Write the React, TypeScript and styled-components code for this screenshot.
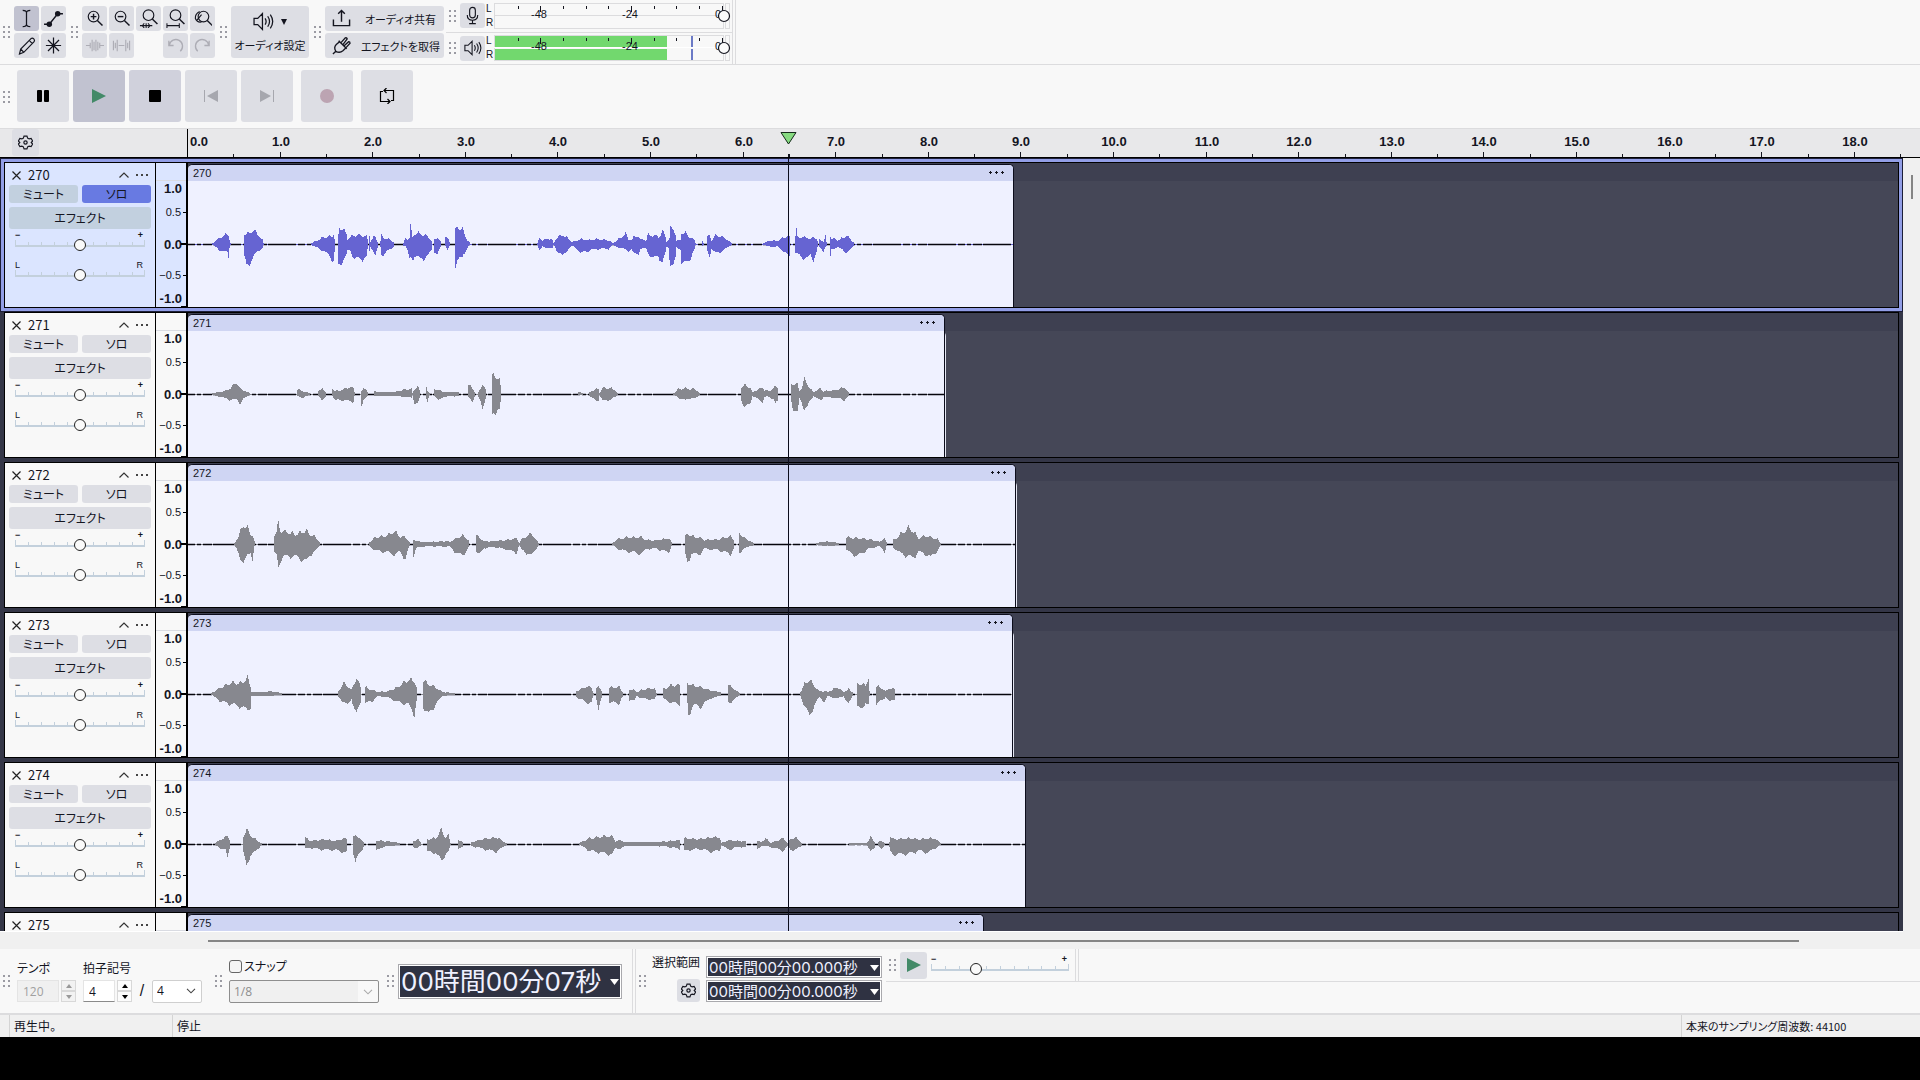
import React from "react";
import styled, { createGlobalStyle } from "styled-components";

const INK = "#14151f";
const FACE = "#dddee4";
const LINE = "#dcdcde";
const UI = `"Liberation Sans", "Noto Sans CJK JP", sans-serif`;
const JP = `"Noto Sans CJK JP", "Liberation Sans", sans-serif`;

const Global = createGlobalStyle`
  *, *::before, *::after { box-sizing: border-box; }
  html, body, #root { height: 100%; }
  body { margin: 0; background: #000; color: ${INK}; font: 12px/16px ${UI}; overflow: hidden; }
  button, input, select { font: inherit; color: inherit; margin: 0; }
  svg { display: block; flex: none; }
`;

const Screen = styled.div`
  height: 100vh;
  padding-bottom: 43px;
  display: flex;
  flex-direction: column;
  background: #000;
`;

const Window = styled.main`
  flex: 1;
  min-height: 0;
  display: flex;
  flex-direction: column;
  background: #f8f8f8;
`;

/* ---------- shared toolbar parts ---------- */

const Dock = styled.div`
  display: flex;
  align-items: stretch;
  flex: none;
  border-bottom: 1px solid ${LINE};
`;

const TopDock = styled(Dock)`
  height: 65px;
`;

const Bar = styled.section<{ $end?: number }>`
  display: flex;
  align-items: center;
  padding-right: ${(p) => p.$end ?? 2}px;
`;

const GripBox = styled.span`
  flex: none;
  width: 14px;
  padding: 0 3px;
`;

const Grip = () => (
  <GripBox>
    <svg width="8" height="12" fill="#9b9ba3">
      {[0, 5, 10].map((y) => (
        <React.Fragment key={y}>
          <rect x="0" y={y} width="2" height="2" />
          <rect x="5" y={y} width="2" height="2" />
        </React.Fragment>
      ))}
    </svg>
  </GripBox>
);

const Button = styled.button<{ $w: number; $h: number; $tone?: string }>`
  flex: none;
  width: ${(p) => p.$w}px;
  height: ${(p) => p.$h}px;
  padding: 0;
  border: 0;
  border-radius: 3px;
  background: ${(p) => p.$tone ?? FACE};
  display: flex;
  align-items: center;
  justify-content: center;
`;

const IconGrid = styled.div<{ $cols: number }>`
  display: grid;
  grid-template-columns: repeat(${(p) => p.$cols}, 25px);
  grid-auto-rows: 25px;
  gap: 2px;
`;

const Stack = styled.div<{ $gap?: number; $end?: number }>`
  display: flex;
  flex-direction: column;
  gap: ${(p) => p.$gap ?? 2}px;
  padding-bottom: ${(p) => p.$end ?? 0}px;
`;

const SetupButton = styled(Button)`
  flex-direction: column;
  gap: 5px;
  font: 11px/16px ${JP};
  font-feature-settings: "palt";
`;

const SetupTop = styled.span`
  display: flex;
  align-items: center;
  gap: 7px;
`;

const WideButton = styled(Button)`
  display: grid;
  grid-template-columns: 32px 1fr;
  justify-items: center;
  font: 11px/16px ${JP};
  font-feature-settings: "palt";
`;

const Double = styled.span`
  width: 4px;
  border: solid ${LINE};
  border-width: 0 1px;
`;

/* ---------- icons ---------- */

const Icon = ({ s = 19, children }: { s?: number; children: React.ReactNode }) => (
  <svg width={s} height={s} viewBox="0 0 20 20" fill="none" stroke={INK} strokeWidth="1.2">
    {children}
  </svg>
);

const Lens = ({ cx = 9, cy = 8 }: { cx?: number; cy?: number }) => (
  <>
    <circle cx={cx} cy={cy} r="5.6" />
    <path d={`M${cx + 4} ${cy + 4}l5.4 5.4`} strokeWidth="1.5" />
  </>
);

const Caret = () => (
  <Icon>
    <path d="M6 1.5q4 0 4 2.500q0-2.500 4-2.500M10 4v12M6 18.500q4 0 4-2.500q0 2.500 4 2.500" strokeWidth="1.3" />
  </Icon>
);
const Envelope = () => (
  <Icon s={21}>
    <path d="M1 15.500h5l8-10h5" strokeWidth="1.3" />
    <circle cx="6" cy="15.500" r="2.600" fill={INK} stroke="none" />
    <circle cx="14" cy="5.500" r="2.600" fill={INK} stroke="none" />
  </Icon>
);
const Pencil = () => (
  <Icon s={20}>
    <path d="M2.500 18l1.200-5L14 2.600q1.500-1 2.800.3t.3 2.800L6.800 16.300zM12.200 4.400l3.400 3.400M3.700 13l3.100 3.300" />
  </Icon>
);
const Star = () => (
  <Icon>
    <path d="M10 1.500v17M2 10h16M4.200 4.200l11.600 11.600M15.800 4.200L4.200 15.800" strokeWidth="1.300" />
  </Icon>
);
const ZoomIn = () => (
  <Icon>
    <Lens />
    <path d="M6 8h6M9 5v6" strokeWidth="1.500" />
  </Icon>
);
const ZoomOut = () => (
  <Icon>
    <Lens />
    <path d="M6 8h6" strokeWidth="1.500" />
  </Icon>
);
const FitSelection = () => (
  <Icon>
    <Lens cx={10} cy={6.5} />
    <path d="M1 17.500h13M5.500 15l-2 2.500 2 2.500M9.500 15l2 2.500-2 2.500M7.500 15v5" strokeWidth="1.100" />
  </Icon>
);
const FitProject = () => (
  <Icon>
    <Lens cx={10} cy={6.5} />
    <path d="M1 17.500h13M1 15v5M14 15v5" strokeWidth="1.100" />
  </Icon>
);
const ZoomToggle = () => (
  <Icon>
    <Lens cx={11} cy={8} />
    <path d="M7 2.600Q2 5 2.500 10q2 4.500 6.500 3.600M3.500 12.500L9 6" />
  </Icon>
);
const Pale = ({ children }: { children: React.ReactNode }) => (
  <svg width="19" height="19" viewBox="0 0 20 20" fill="none" stroke="#adadb5" strokeWidth="1.200">
    {children}
  </svg>
);
const Trim = () => (
  <Pale>
    <path d="M1 10h4M15 10h5M5.500 7v6M7.500 4v12M9.500 6v9M11.500 4v12M13.500 6v9M15.500 7v6" />
  </Pale>
);
const Silence = () => (
  <Pale>
    <path d="M1.500 5v10M3.500 7v6M5.500 4v12M7 10h6M14.500 4v12M16.500 7v6M18.500 5v10" />
  </Pale>
);
const Undo = () => (
  <Pale>
    <path d="M3 5v5h5M3.500 9.500A7 7 0 1 1 15 16" strokeWidth="1.400" />
  </Pale>
);
const Redo = () => (
  <Pale>
    <path d="M17 5v5h-5M16.500 9.500A7 7 0 1 0 5 16" strokeWidth="1.400" />
  </Pale>
);
const Speaker = ({ s = 20 }: { s?: number }) => (
  <Icon s={s}>
    <path d="M1 7h3.500L9 2.500v15L4.500 13H1zM11.500 7q2 3 0 6M14 5q3.500 5 0 10M16.500 3.500q4.500 6.500 0 13" />
  </Icon>
);
const Mic = () => (
  <Icon>
    <rect x="7" y="1.500" width="6" height="11" rx="3" />
    <path d="M4.500 9.500q0 5.500 5.500 5.500t5.500-5.500M10 15v3.500M6.500 18.500h7" />
  </Icon>
);
const Share = () => (
  <Icon>
    <path d="M1.500 11v6.500h17V11M10 13.500V2M6.500 5L10 1.500 13.500 5" strokeWidth="1.500" />
  </Icon>
);
const Plug = () => (
  <Icon>
    <path
      d="M1 19l3-3M4 16q-2.500-4 .5-7L8 6l6.500 6.500-3 3Q8 18.500 4 16zM7 5l8.500 8.500M9.500 7l4.500-5q1.500-.5 2 1L11.500 9M12.500 10.500l5-4.500q1.500 0 1.500 1.500L14.500 12.500"
      strokeWidth="1.400"
    />
  </Icon>
);
const Gear = ({ s = 15 }: { s?: number }) => (
  <Icon s={s}>
    <path
      d="M8 1.500h4l.8 2.600 2 1.100 2.700-.7 2 3.500-1.900 2 1.900 2-2 3.500-2.700-.7-2 1.100-.8 2.600H8l-.8-2.600-2-1.100-2.700.7-2-3.500 1.900-2-1.900-2 2-3.500 2.700.7 2-1.100z"
      strokeWidth="1.500"
    />
    <circle cx="10" cy="10" r="2.200" strokeWidth="1.600" />
  </Icon>
);
const Down = ({ w = 6, h = 6, c = INK }: { w?: number; h?: number; c?: string }) => (
  <svg width={w} height={h} viewBox="0 0 10 10" preserveAspectRatio="none">
    <path d="M0 0h10L5 10z" fill={c} />
  </svg>
);
const PlayMark = () => (
  <svg width="14" height="14">
    <path d="M0 0l14 7-14 7z" fill="#438a68" />
  </svg>
);

/* ---------- meters ---------- */

const MeterRow = styled.div`
  flex: 1;
  display: flex;
  align-items: center;
  & + & { border-top: 1px solid ${LINE}; }
`;

const ChannelNames = styled.span`
  width: 9px;
  height: 26px;
  padding-left: 1px;
  display: flex;
  flex-direction: column;
  justify-content: space-between;
  font-size: 10px;
  line-height: 12px;
`;

const Meter = ({ level, peak }: { level: number; peak: number }) => (
  <svg width="238" height="26" fontFamily="Liberation Sans" fontSize="11" fill={INK}>
    <g fill="none" stroke={LINE}>
      <rect x="0.500" y="0.500" width="229" height="25" />
      <path d="M0 12.500h230" />
      <rect x="231.500" y="0.500" width="4" height="25" />
    </g>
    {level > 0 && (
      <>
        <rect x="1" y="1" width={level} height="11" fill="#72d86e" />
        <rect x="1" y="14" width={level} height="11" fill="#72d86e" />
        <path d="M0 12.500h230" stroke="#fff" />
        <path d={`M${peak} 1v11M${peak} 14v11`} stroke="#6b7ac6" strokeWidth="2" />
      </>
    )}
    {Array.from({ length: 10 }, (_, i) => (
      <rect key={i} x={Math.round(23.5 + i * 22.7)} y="3" width="1" height={i % 4 === 1 ? 6 : 3} />
    ))}
    <text x="45" y="15" textAnchor="middle">-48</text>
    <text x="136" y="15" textAnchor="middle">-24</text>
    <text x="221" y="15">0</text>
    <circle cx="230" cy="13" r="5.500" fill="#fbfbfb" stroke={INK} strokeWidth="1.200" />
  </svg>
);

/* ---------- transport ---------- */

const TransportRow = styled.div`
  display: flex;
  gap: 4px;
  padding: 5px 3px 6px;
`;
const Apart = styled.div`
  padding-left: 4px;
`;

const Idle = "#a6a7ae";

/* ---------- time ruler ---------- */

const TimeRuler = styled.div`
  flex: none;
  display: flex;
  height: 29px;
  background: #e8e8ea;
  border-bottom: 1px solid #000;
`;
const RulerHead = styled.div`
  width: 187px;
  padding-left: 12px;
`;
const RulerScale = styled.div`
  flex: 1;
  min-width: 0;
`;

const SECOND = 92.6;

const Scale = () => (
  <svg width="100%" height="28" fontFamily="Liberation Sans" fontSize="13" fontWeight="700" fill={INK}>
    <rect x="0" y="0" width="1" height="28" fill="#000" />
    {Array.from({ length: 37 }, (_, i) => i + 1).map((i) => (
      <rect key={i} x={Math.round((i * SECOND) / 2)} y={i % 2 ? 25 : 23} width="1" height="5" />
    ))}
    {Array.from({ length: 19 }, (_, i) => (
      <text key={i} x={i ? Math.round(i * SECOND) + 1 : 3} y="17" textAnchor={i ? "middle" : "start"}>
        {i}.0
      </text>
    ))}
    <rect x="601" y="25" width="1" height="3" />
    <path d="M594 3.500h15l-7.500 11.500z" fill="#86da80" stroke="#142a1a" />
  </svg>
);

/* ---------- tracks ---------- */

const Workspace = styled.div`
  flex: 1;
  min-height: 0;
  display: flex;
  background: #f0f0f0;
`;
const TrackList = styled.div`
  position: relative;
  flex: 1;
  min-width: 0;
  overflow: hidden;
  padding: 4px;
  display: flex;
  flex-direction: column;
  gap: 4px;
  background: #343647;
  border-bottom: 1px solid #fff;
`;
const Playhead = styled.i`
  position: absolute;
  top: 0;
  bottom: 0;
  left: 788px;
  width: 1px;
  background: #0c0d1c;
`;
const VScroll = styled.div`
  width: 17px;
  padding: 17px 0 0 8px;
`;
const VThumb = styled.div`
  width: 2px;
  height: 24px;
  background: #858585;
`;
const HScroll = styled.div`
  flex: none;
  height: 17px;
  padding: 8px 121px 0 208px;
  background: #f0f0f0;
`;
const HThumb = styled.div`
  height: 2px;
  background: #858585;
`;

const TrackFrame = styled.section<{ $on: boolean }>`
  flex: none;
  display: flex;
  height: 146px;
  border: 1px solid #000;
  background: ${(p) => (p.$on ? "#dbe5ff" : "#f8f8f8")};
  box-shadow: ${(p) => (p.$on ? "0 0 0 3px #929ee6, 0 0 0 4px #1d1f38" : "none")};
`;
const Controls = styled.div`
  flex: none;
  width: 151px;
  padding: 0 4px;
  border-right: 1px solid #000;
`;
const TitleRow = styled.header`
  display: grid;
  grid-template-columns: 16px 1fr 18px 18px;
  align-items: center;
  height: 22px;
  padding: 2px 0 0 3px;
`;
const Title = styled.span`
  font: 13px/20px ${JP};
`;
const Bare = styled.button`
  padding: 0;
  border: 0;
  background: none;
  display: flex;
  justify-content: center;
`;
const CloseBare = styled(Bare)`
  justify-content: flex-start;
`;
const Pair = styled.div`
  display: grid;
  grid-template-columns: 1fr 1fr;
  gap: 4px;
  margin-bottom: 4px;
`;
const TrackButton = styled.button<{ $h: number; $tone: string }>`
  width: 100%;
  height: ${(p) => p.$h}px;
  padding: 0;
  border: 0;
  border-radius: 3px;
  background: ${(p) => p.$tone};
  font: 12px/16px ${JP};
  font-feature-settings: "palt";
`;
const Slide = styled.label`
  display: grid;
  grid-template-columns: 1fr 1fr;
  grid-template-rows: 10px 12px;
  align-content: start;
  height: 30px;
  padding: 1px 6px 0;
  font-size: 9px;
  line-height: 10px;
`;
const GainSlide = styled(Slide)`
  font-weight: 700;
`;
const Right = styled.span`
  text-align: right;
  padding-right: 2px;
`;
const Range = styled.input`
  appearance: none;
  grid-column: 1 / -1;
  align-self: end;
  width: 100%;
  height: 14px;
  background:
    linear-gradient(#c3d0dc, #c3d0dc) 0 7px / 100% 2px no-repeat,
    linear-gradient(#c3d0dc, #c3d0dc) 0 2px / 1px 6px no-repeat,
    linear-gradient(#c3d0dc, #c3d0dc) 100% 2px / 1px 6px no-repeat,
    repeating-linear-gradient(90deg, #c3d0dc 0 1px, transparent 1px 10%) 0 4px / 100% 4px no-repeat;
  &::-webkit-slider-thumb {
    appearance: none;
    width: 12px;
    height: 12px;
    border: 1px solid #222;
    border-radius: 50%;
    background: #fafafa;
  }
`;

const Lane = styled.div`
  flex: 1;
  min-width: 0;
  overflow: hidden;
  padding-top: 1px;
  border-left: 2px solid #000;
  background: linear-gradient(#3e4051 18px, #454757 18px);
`;
const Clip = styled.article<{ $edge?: boolean }>`
  height: 143px;
  overflow: hidden;
  border: solid #0c0d1c;
  border-width: 1px 1px 0 0;
  border-radius: 5px 5px 0 0;
  background: #eff1ff;
  box-shadow: ${(p) => (p.$edge ? "1px 17px 0 #e4e6f2" : "none")};
`;
const ClipHead = styled.header`
  display: flex;
  align-items: center;
  justify-content: space-between;
  height: 16px;
  padding: 0 9px 0 5px;
  background: #cfd5f3;
  font: 11px/16px ${UI};
`;

const Dots = () => (
  <svg width="15" height="4" fill={INK}>
    {[0, 1, 2].map((i) => (
      <path key={i} d={`M${i * 6 + 1} 0h1v1h1v1h-1v1h-1v-1h-1v-1h1z`} />
    ))}
  </svg>
);
const SmallDots = () => (
  <svg width="12" height="3" fill="#444">
    <rect x="0" width="2" height="2" />
    <rect x="5" width="2" height="2" />
    <rect x="10" width="2" height="2" />
  </svg>
);

const LevelRuler = ({ marks }: { marks: boolean }) => (
  <svg width="30" height="144" fontFamily="Liberation Sans" fontSize="13" fill={INK} textAnchor="end">
    <rect y="17" width="30" height="1" fill="#d9dbe2" />
    {marks && (
      <>
        <g fontWeight="700">
          <text x="26" y="30">1.0</text>
          <text x="26" y="86">0.0</text>
          <text x="26" y="140">-1.0</text>
        </g>
        <g fontSize="11">
          <text x="25" y="53">0.5</text>
          <text x="25" y="116">−0.5</text>
        </g>
        <path d="M27 49.500h3M27 112.500h3M25 143.500h5" stroke="#000" />
        <path d="M25 81h5" stroke="#000" strokeWidth="2" />
      </>
    )}
  </svg>
);

/* Envelope points are "x up down"; "/" separates the sounding parts. */
const outline = (source: string) =>
  source
    .split("/")
    .map((part) => {
      const pts = part.trim().split(/\s*,\s*/).map((p) => p.split(" ").map(Number));
      const top: string[] = [];
      const bottom: string[] = [];
      const first = Math.round(pts[0][0]);
      const last = Math.round(pts[pts.length - 1][0]);
      for (let x = first; x <= last; x++) {
        let k = pts.findIndex((p) => p[0] >= x);
        if (k < 1) k = k < 0 ? pts.length - 1 : 1;
        const a = pts[k - 1];
        const b = pts[k] ?? a;
        const t = Math.min(1, Math.max(0, (x - a[0]) / (b[0] - a[0] || 1)));
        const n = 1.18 - 0.36 * Math.abs(Math.sin(x * 12.9898));
        const m = 1.18 - 0.36 * Math.abs(Math.sin(x * 78.233));
        const up = Math.max(1, Math.round((a[1] + (b[1] - a[1]) * t) * n));
        const down = Math.max(1, Math.round((a[2] + (b[2] - a[2]) * t) * m));
        top.push(`L${x} ${63 - up}L${x + 1} ${63 - up}`);
        bottom.unshift(`L${x + 1} ${63 + down}L${x} ${63 + down}`);
      }
      return `M${first} 63${top.join("")}${bottom.join("")}Z`;
    })
    .join("");

type TrackData = { name: string; width: number; wave: string; edge?: boolean };

const tracks: TrackData[] = [
  {
    name: "270",
    width: 826,
    wave: "24 1 1,34 8 8,39 10 8,40 10 13,41 5 3,42 1 1/56 11 14,58 10 23,64 14 16,68 12 9,74 4 4,75 1 1/123 1 1,135 7 7,144 8 16,145 11 17,146 6 9/150 10 23,151 19 22,154 15 17,158 11 12,159 5 7,162 7 7,166 9 16,174 9 15,178 8 14,179 5 6/181 10 8,182 3 3,185 7 7,187 7 12,189 3 5/192 3 3,193 9 11,196 6 10,200 5 7,205 2 3/215 1 2,217 6 2,219 5 7,221 6 17,222 18 15,224 7 15,226 11 12,232 11 16,239 8 13,243 3 7/246 5 8,249 7 11,252 3 4/257 8 2,259 6 7,261 2 2/267 14 22,269 18 18,274 15 14,275 13 10,279 4 4,281 2 1/349 1 1,351 7 7,354 3 3,359 6 4,364 4 5,365 1 1,368 6 6,374 10 13,379 6 6,384 2 2,389 4 5,392 5 10,399 4 7,409 5 5,420 4 5,424 1 1,429 4 3,437 11 6,440 5 7,443 4 6,446 8 11,450 8 10,452 5 5,458 4 5,459 9 8,465 9 16,469 8 12,470 7 12,474 13 20,477 8 10,478 3 3,480 4 4,481 6 14,482 16 20,485 16 24,487 10 16,488 3 4,492 4 5,493 12 20,497 11 21,502 7 14,506 4 6,507 1 1/514 3 2,515 1 1/519 7 8,521 9 12,523 4 5,527 9 10,532 8 8,537 6 5,543 1 1/575 1 1,582 4 3,589 3 3,594 6 6,600 9 13,601 7 13/607 8 10,608 14 11,609 7 11,615 7 14,619 7 16,622 5 11,625 7 16,628 6 9,629 3 4/631 4 3,635 3 7,637 9 3,638 2 2/642 8 13,643 6 5,649 4 4,654 6 5,658 9 10,661 6 7,665 2 2",
  },
  {
    name: "271",
    width: 757,
    edge: true,
    wave: "24 1 1,35 3 4,42 6 6,48 12 6,52 5 9,55 4 5,61 1 1/109 5 2,115 3 4,121 1 1/130 4 2,134 5 6,137 3 4/144 6 2,147 3 7,152 4 6,160 7 7,165 6 8,166 2 2/173 3 11,175 7 6,179 2 3/186 3 2,192 2 2,207 2 2,217 5 3,223 5 4,224 1 1,226 5 9,229 8 11,231 4 5/238 6 5,239 3 9,241 1 1/246 5 2,250 4 7,255 2 3,270 2 2/280 10 4,284 6 9,286 3 3/290 2 3,292 6 8,294 11 17,297 4 4/304 17 23,305 20 20,309 17 16,311 15 18,312 8 10/390 2 1,394 1 1/401 2 2,407 5 7,410 5 6,411 1 1,414 6 7,422 6 6,427 4 3,429 1 1/485 1 1,490 5 4,497 6 7,502 5 4,507 5 5,511 1 1/553 7 6,556 9 15,559 8 12,562 6 9,564 2 2,569 4 5,574 7 8,576 4 3,580 3 3,585 6 5,587 8 10,589 7 8/603 11 8,605 11 16,609 10 21,611 3 5,613 6 8,616 15 16,619 11 14,622 5 6,625 2 2,632 6 7,635 3 3,647 4 4,656 7 6,660 2 2",
  },
  {
    name: "272",
    width: 828,
    edge: true,
    wave: "46 1 1,50 8 9,55 20 22,59 17 11,62 11 8,64 9 18,66 3 3/86 10 10,88 12 12,90 22 24,92 14 16,96 13 13,107 10 13,118 14 18,121 10 12,126 8 8,131 2 2/181 2 2,187 7 7,195 8 8,200 10 9,206 13 11,211 8 8,217 7 15,221 2 2/225 5 11,228 3 4,239 2 2,258 3 3,261 2 2,266 5 8,274 9 12,280 4 4/288 9 8,291 6 11,296 3 4,305 3 3,316 4 5,328 6 9,331 1 1,333 5 6,343 11 12,347 5 6,350 1 1/424 1 1,429 5 5,439 7 8,453 7 10,458 4 5,469 4 5,480 6 9,483 2 2/497 8 12,499 11 20,503 8 10,510 7 11,516 4 5,530 5 6,542 8 11,545 5 5/551 12 9,555 7 5,565 1 1/628 1 1,642 3 2,650 1 1/658 7 7,669 6 13,680 5 5,691 2 2,696 6 8,698 2 2/705 4 4,713 11 10,720 17 13,724 14 15,730 6 8,738 9 11,742 7 14,749 5 7,752 1 1",
  },
  {
    name: "273",
    width: 825,
    edge: true,
    wave: "23 1 1,33 7 8,44 12 11,52 11 13,59 17 17,62 8 13,63 2 2,75 2 2,82 3 2,93 1 1/150 3 3,155 11 8,159 9 12,163 4 5,168 17 22,172 7 9/177 7 10,184 4 7,189 2 2,200 3 4,209 7 8,220 15 11,226 13 21,228 8 8/235 14 13,240 10 22,247 7 11,254 2 2,266 1 1/388 3 3,398 8 9,403 7 9,405 1 1/408 5 6,410 9 14,413 4 5/421 7 9,431 7 9,434 2 3/441 5 6,446 4 7,448 2 2,455 5 5,466 6 6,468 1 1/475 5 5,483 9 9,491 9 11/499 12 10,500 11 21,505 9 12,513 7 13,521 4 5,532 2 2/540 9 9,546 5 6,551 1 1/612 2 2,616 10 12,621 15 24,626 8 11,631 3 3,636 3 8,639 2 2,649 7 5,655 2 2,660 5 11,664 2 2/669 11 14,672 11 17,677 9 9,680 18 12,681 3 3/688 8 11,694 6 6,697 3 3,701 6 9,706 5 5",
  },
  {
    name: "274",
    width: 838,
    wave: "27 1 1,33 5 5,37 7 6,39 9 13,41 5 4/55 8 10,58 15 24,62 9 11,67 5 8,73 1 1/117 7 5,121 3 4,136 5 6,146 3 6,158 6 9/165 9 10,167 11 20,170 6 12,175 3 3/188 4 7,195 3 3,200 3 2,211 1 1/225 3 3,229 5 5,232 2 2/239 5 8,247 6 9,253 15 18,257 7 10,260 9 8,262 1 1/270 5 6,274 2 3/283 2 2,294 5 5,308 7 8,318 1 1/391 1 1,401 6 7,417 8 10,424 8 11,427 3 4,432 4 5,437 2 2,469 2 2,480 3 3,491 4 5/496 6 7,510 5 5,524 7 8,531 7 7,533 1 1,540 4 6,549 3 3,557 3 3/569 3 6,573 2 2,577 6 2,582 1 3,595 6 7,599 1 2,602 5 6,607 7 6,613 1 2/661 1 1,678 1 1,682 7 8,686 3 3/690 2 2,693 4 6,696 1 1/701 3 4,702 8 9,705 5 11,722 6 10,730 5 7,740 6 9,746 6 5,752 1 1",
  },
  { name: "275", width: 796, wave: "" },
];

const Track = ({ name, width, wave, edge, on }: TrackData & { on: boolean }) => {
  const face = on ? "#c2d0df" : FACE;
  const ink = on ? "#6664d2" : "#87888f";
  const loaded = wave !== "";
  return (
    <TrackFrame $on={on}>
      <Controls>
        <TitleRow>
          <CloseBare aria-label="閉じる">
            <svg width="9" height="9" stroke="#222" strokeWidth="1.200">
              <path d="M.5.5l8 8M8.500.5l-8 8" />
            </svg>
          </CloseBare>
          <Title>{name}</Title>
          <Bare aria-label="折りたたむ">
            <svg width="10" height="6" fill="none" stroke="#333" strokeWidth="1.200">
              <path d="M.5 5.500L5 1l4.500 4.500" />
            </svg>
          </Bare>
          <Bare aria-label="メニュー">
            <SmallDots />
          </Bare>
        </TitleRow>
        {loaded && (
          <>
            <Pair>
              <TrackButton $h={18} $tone={face}>ミュート</TrackButton>
              <TrackButton $h={18} $tone={on ? "#687ae2" : face}>ソロ</TrackButton>
            </Pair>
            <TrackButton $h={22} $tone={face}>エフェクト</TrackButton>
            <GainSlide>
              <span>−</span>
              <Right>+</Right>
              <Range type="range" defaultValue={50} />
            </GainSlide>
            <Slide>
              <span>L</span>
              <Right>R</Right>
              <Range type="range" defaultValue={50} />
            </Slide>
          </>
        )}
      </Controls>
      <LevelRuler marks={loaded} />
      <Lane>
        <Clip $edge={edge} style={{ width }}>
          <ClipHead>
            <span>{name}</span>
            <Dots />
          </ClipHead>
          {loaded && (
            <svg width="100%" height="126">
              <path d="M0 63.500H900" stroke={ink} />
              <path d="M0 63.500H900" stroke="#05050c" strokeWidth="1.400" strokeDasharray="7 2 4 2 9 1 28 2" />
              <path d={outline(wave)} fill={ink} shapeRendering="crispEdges" />
            </svg>
          )}
        </Clip>
      </Lane>
    </TrackFrame>
  );
};

/* ---------- bottom toolbars ---------- */

const BottomDock = styled(Dock)`
  height: 66px;
  border-bottom: 2px solid ${LINE};
`;
const Inset = styled.div`
  padding-left: 3px;
`;
const Meters = styled.div`
  display: flex;
  align-items: flex-start;
`;
const FieldGroup = styled.div<{ $w: number }>`
  width: ${(p) => p.$w}px;
  font: 12px/16px ${JP};
  font-feature-settings: "palt";
`;
const FieldRow = styled.div`
  display: flex;
  align-items: center;
  height: 23px;
  margin-top: 4px;
`;
const NumberBox = styled.input<{ $w: number }>`
  width: ${(p) => p.$w}px;
  height: 22px;
  padding: 0 5px;
  border: 1px solid #e4e4e4;
  border-bottom-color: #8a8a8a;
  background: #fff;
  font: 12px/20px "Open Sans", sans-serif;
  &:disabled { background: #f0f0f0; border-color: #e4e4e4; color: #a0a0a0; }
`;
const Spin = styled.span`
  display: flex;
  flex-direction: column;
  margin-left: 2px;
`;
const SpinButton = styled.button`
  width: 15px;
  height: 11px;
  padding: 0;
  border: 1px solid #d8d8d8;
  background: #fcfcfc;
  display: flex;
  align-items: center;
  justify-content: center;
  &:disabled { background: #f2f2f2; }
`;
const Slash = styled.span`
  width: 20px;
  text-align: center;
  font: 16px/20px ${UI};
`;
const SelectBox = styled.span<{ $w: number; $off?: boolean }>`
  display: grid;
  grid-template-columns: 1fr 20px;
  align-items: center;
  width: ${(p) => p.$w}px;
  height: 23px;
  border: 1px solid ${(p) => (p.$off ? "#8e8e8e" : "#cfcfcf")};
  border-radius: 2px;
  background: ${(p) => (p.$off ? "linear-gradient(90deg, #f0f0f0 128px, #f8f8f8 128px)" : "#fff")};
  select {
    grid-area: 1 / 1 / 2 / 3;
    appearance: none;
    width: 100%;
    padding: 0 4px;
    border: 0;
    background: none;
    font: 12px/20px "Open Sans", sans-serif;
    color: ${(p) => (p.$off ? "#8e8e8e" : INK)};
    opacity: 1;
  }
  svg { grid-area: 1 / 2; justify-self: center; }
`;
const Chevron = ({ c = "#444" }: { c?: string }) => (
  <svg width="10" height="6" fill="none" stroke={c} strokeWidth="1.100">
    <path d="M1 .8l4 4 4-4" />
  </svg>
);
const Check = styled.label`
  display: flex;
  align-items: center;
  gap: 2px;
  font: 12px/14px ${JP};
  font-feature-settings: "palt";
  input {
    appearance: none;
    width: 13px;
    height: 13px;
    border: 1px solid #666;
    border-radius: 3px;
    background: #f5f5f5;
  }
`;
const TimeBox = styled.div<{ $w: number; $h: number; $size: number }>`
  display: flex;
  align-items: center;
  justify-content: space-between;
  width: ${(p) => p.$w}px;
  height: ${(p) => p.$h}px;
  padding: 2px 2px 0;
  border: 1px solid #a9a9ad;
  outline: 1px solid #fff;
  outline-offset: -2px;
  background: #2f3242;
  color: #eff1ff;
  font: ${(p) => p.$size}px/20px Inter, "Noto Sans CJK JP", sans-serif;
  white-space: nowrap;
`;
const SelectionHead = styled.div`
  width: 50px;
  margin-right: 6px;
  padding-bottom: 6px;
  display: flex;
  flex-direction: column;
  align-items: flex-end;
  gap: 9px;
  font: 12px/16px ${JP};
  white-space: nowrap;
`;
const RightColumn = styled.div`
  flex: 1;
`;
const SpeedRow = styled.div`
  display: flex;
  height: 33px;
  border-bottom: 1px solid ${LINE};
`;
const SpeedSlide = styled(Slide)`
  align-self: flex-start;
  width: 138px;
  padding: 5px 0 0;
  margin-left: 4px;
  font-weight: 700;
`;

const Status = styled.footer`
  flex: none;
  display: flex;
  height: 22px;
  padding-left: 9px;
  background: #f0f0f0;
  font: 12px/22px ${JP};
  font-feature-settings: "palt";
`;
const StatusCell = styled.span<{ $w?: number }>`
  ${(p) => (p.$w ? `width: ${p.$w}px;` : "flex: 1;")}
  padding-left: 4px;
  border-left: 1px solid #d4d4d4;
`;
const RateCell = styled(StatusCell)`
  font-size: 11px;
`;

export default function App() {
  return (
    <Screen>
      <Global />
      <Window>
        <TopDock>
          <Bar>
            <Grip />
            <IconGrid $cols={2}>
              <Button $w={25} $h={25} $tone="#c1c2d0" aria-label="選択"><Caret /></Button>
              <Button $w={25} $h={25} aria-label="エンベロープ"><Envelope /></Button>
              <Button $w={25} $h={25} aria-label="ドロー"><Pencil /></Button>
              <Button $w={25} $h={25} aria-label="マルチ"><Star /></Button>
            </IconGrid>
          </Bar>
          <Bar>
            <Grip />
            <IconGrid $cols={5}>
              <Button $w={25} $h={25} aria-label="拡大"><ZoomIn /></Button>
              <Button $w={25} $h={25} aria-label="縮小"><ZoomOut /></Button>
              <Button $w={25} $h={25} aria-label="選択範囲に合わせる"><FitSelection /></Button>
              <Button $w={25} $h={25} aria-label="プロジェクトに合わせる"><FitProject /></Button>
              <Button $w={25} $h={25} aria-label="ズーム切替"><ZoomToggle /></Button>
              <Button $w={25} $h={25} aria-label="トリム"><Trim /></Button>
              <Button $w={25} $h={25} aria-label="無音"><Silence /></Button>
              <span />
              <Button $w={25} $h={25} aria-label="元に戻す"><Undo /></Button>
              <Button $w={25} $h={25} aria-label="やり直す"><Redo /></Button>
            </IconGrid>
          </Bar>
          <Bar>
            <Grip />
            <SetupButton $w={78} $h={52}>
              <SetupTop>
                <Speaker s={21} />
                <Down />
              </SetupTop>
              オーディオ設定
            </SetupButton>
          </Bar>
          <Bar>
            <Grip />
            <Stack>
              <WideButton $w={119} $h={25}><Share /><span>オーディオ共有</span></WideButton>
              <WideButton $w={119} $h={25}><Plug /><span>エフェクトを取得</span></WideButton>
            </Stack>
          </Bar>
          <Stack $gap={0}>
            <MeterRow>
              <Grip />
              <Button $w={25} $h={25} aria-label="録音メーター"><Mic /></Button>
              <ChannelNames><span>L</span><span>R</span></ChannelNames>
              <Meter level={0} peak={0} />
            </MeterRow>
            <MeterRow>
              <Grip />
              <Button $w={25} $h={25} aria-label="再生メーター"><Speaker s={18} /></Button>
              <ChannelNames><span>L</span><span>R</span></ChannelNames>
              <Meter level={172} peak={198} />
            </MeterRow>
          </Stack>
          <Double />
        </TopDock>

        <Dock>
          <Bar>
            <Grip />
            <TransportRow>
              <Button $w={52} $h={52} aria-label="一時停止">
                <svg width="12" height="12"><rect width="5" height="12" rx="1" /><rect x="7" width="5" height="12" rx="1" /></svg>
              </Button>
              <Button $w={52} $h={52} $tone="#c1c2d0" aria-label="再生"><PlayMark /></Button>
              <Button $w={52} $h={52} $tone="#d0d1dc" aria-label="停止">
                <svg width="12" height="12"><rect width="12" height="12" rx="1" /></svg>
              </Button>
              <Button $w={52} $h={52} aria-label="先頭へ">
                <svg width="14" height="12" fill={Idle}><rect width="1" height="12" /><path d="M14 0v12L3 6z" /></svg>
              </Button>
              <Button $w={52} $h={52} aria-label="末尾へ">
                <svg width="14" height="12" fill={Idle}><rect x="13" width="1" height="12" /><path d="M0 0v12l11-6z" /></svg>
              </Button>
              <Apart>
                <Button $w={52} $h={52} aria-label="録音">
                  <svg width="14" height="14"><circle cx="7" cy="7" r="7" fill="#bca4b2" /></svg>
                </Button>
              </Apart>
              <Apart>
                <Button $w={52} $h={52} aria-label="ループ">
                  <svg width="16" height="16" fill="none" stroke="#000" strokeWidth="1.200">
                    <path d="M4 3.500H1.500v10h9.500M12 12.500h2.500v-10H5M7.500 0L5 2.500 7.500 5M8.500 11l2.500 2.500L8.500 16" />
                  </svg>
                </Button>
              </Apart>
            </TransportRow>
          </Bar>
        </Dock>

        <TimeRuler>
          <RulerHead>
            <Button $w={27} $h={27} aria-label="タイムライン設定"><Gear /></Button>
          </RulerHead>
          <RulerScale><Scale /></RulerScale>
        </TimeRuler>

        <Workspace>
          <TrackList>
            {tracks.map((t, i) => (
              <Track key={t.name} {...t} on={i === 0} />
            ))}
            <Playhead />
          </TrackList>
          <VScroll><VThumb /></VScroll>
        </Workspace>
        <HScroll><HThumb /></HScroll>

        <BottomDock>
          <Bar $end={10}>
            <Grip />
            <Inset>
              <Meters>
                <FieldGroup $w={66}>
                  <label htmlFor="tempo">テンポ</label>
                  <FieldRow>
                    <NumberBox id="tempo" $w={42} defaultValue="120" disabled />
                    <Spin>
                      <SpinButton disabled aria-label="上げる"><svg width="6" height="4"><path d="M0 4h6L3 0z" fill="#999" /></svg></SpinButton>
                      <SpinButton disabled aria-label="下げる"><Down w={6} h={4} c="#999" /></SpinButton>
                    </Spin>
                  </FieldRow>
                </FieldGroup>
                <FieldGroup $w={119}>
                  <label htmlFor="beats">拍子記号</label>
                  <FieldRow>
                    <NumberBox id="beats" $w={32} defaultValue="4" />
                    <Spin>
                      <SpinButton aria-label="増やす"><svg width="6" height="4"><path d="M0 4h6L3 0z" /></svg></SpinButton>
                      <SpinButton aria-label="減らす"><Down w={6} h={4} c="#000" /></SpinButton>
                    </Spin>
                    <Slash>/</Slash>
                    <SelectBox $w={50}>
                      <select aria-label="拍子の分母"><option>4</option></select>
                      <Chevron />
                    </SelectBox>
                  </FieldRow>
                </FieldGroup>
              </Meters>
            </Inset>
          </Bar>
          <Bar $end={5}>
            <Grip />
            <Inset>
              <Stack $gap={7}>
                <Check><input type="checkbox" />スナップ</Check>
                <SelectBox $w={150} $off>
                  <select aria-label="スナップ単位" disabled><option>1/8</option></select>
                  <Chevron c="#aaa" />
                </SelectBox>
              </Stack>
            </Inset>
          </Bar>
          <Bar $end={10}>
            <Grip />
            <TimeBox $w={224} $h={35} $size={26}>
              <span>00時間00分07秒</span>
              <Down w={9} h={6} c="#fff" />
            </TimeBox>
          </Bar>
          <Double />
          <Bar $end={4}>
            <Grip />
            <SelectionHead>
              <span>選択範囲</span>
              <Button $w={23} $h={23} aria-label="選択範囲の設定"><Gear /></Button>
            </SelectionHead>
            <Stack $end={4}>
              <TimeBox $w={176} $h={22} $size={15}>
                <span>00時間00分00.000秒</span>
                <Down w={9} h={6} c="#fff" />
              </TimeBox>
              <TimeBox $w={176} $h={22} $size={15}>
                <span>00時間00分00.000秒</span>
                <Down w={9} h={6} c="#fff" />
              </TimeBox>
            </Stack>
          </Bar>
          <RightColumn>
            <SpeedRow>
              <Bar $end={6}>
                <Grip />
                <Button $w={27} $h={27} aria-label="指定速度で再生"><PlayMark /></Button>
                <SpeedSlide>
                  <span>−</span>
                  <Right>+</Right>
                  <Range type="range" defaultValue={31} />
                </SpeedSlide>
              </Bar>
              <Double />
            </SpeedRow>
          </RightColumn>
        </BottomDock>

        <Status>
          <StatusCell $w={163}>再生中。</StatusCell>
          <StatusCell>停止</StatusCell>
          <RateCell $w={239}>本来のサンプリング周波数: 44100</RateCell>
        </Status>
      </Window>
    </Screen>
  );
}
